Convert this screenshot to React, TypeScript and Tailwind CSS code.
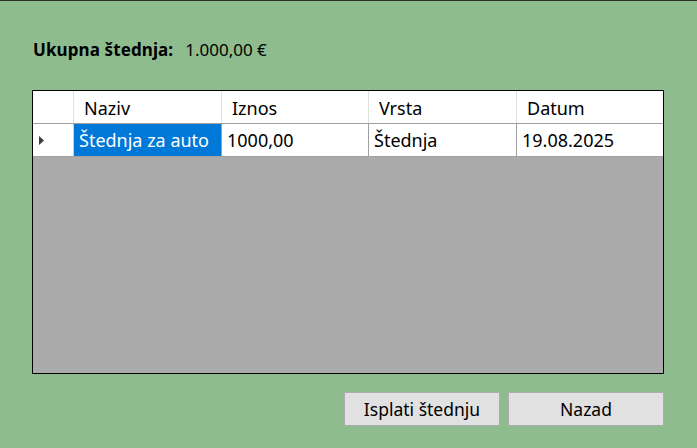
export default function App() {
  const font = { fontFamily: '"Noto Sans", "Open Sans", sans-serif' };
  return (
    <div
      className="w-[697px] h-[448px] bg-[#8fbc8f] border-t border-[#2b2b2b] text-black overflow-hidden"
      style={font}
    >
      {/* Summary */}
      <div className="flex items-center h-[22px] mt-[37px] ml-[33px] gap-[12px]">
        <span className="text-[17px] font-bold leading-none tracking-[0.1px]">Ukupna štednja:</span>
        <span className="text-[17px] leading-none">1.000,00 €</span>
      </div>

      {/* Grid */}
      <div className="ml-[32px] mt-[30px] w-[632px] h-[284px] border border-black bg-[#ababab] flex flex-col">
        <div className="flex h-[33px] bg-white border-b border-[#a0a0a0] text-[18px]">
          <div className="w-[41px] border-r border-[#e0e0e0]" />
          <div className="w-[148px] border-r border-[#e0e0e0] pl-[10px] pt-[3px] flex items-center">Naziv</div>
          <div className="w-[147px] border-r border-[#e0e0e0] pl-[10px] pt-[3px] flex items-center">Iznos</div>
          <div className="w-[148px] border-r border-[#e0e0e0] pl-[10px] pt-[3px] flex items-center">Vrsta</div>
          <div className="flex-1 pl-[10px] pt-[3px] flex items-center">Datum</div>
        </div>
        <div className="flex h-[33px] bg-white border-b border-[#a0a0a0] text-[18px]">
          <div className="w-[41px] border-r border-[#d0d0d0] flex items-center pl-[6px]">
            <svg width="6" height="9" viewBox="0 0 6 9">
              <path d="M0 0 L5 4.5 L0 9 Z" fill="#3c3c3c" />
            </svg>
          </div>
          <div className="w-[148px] border-r border-[#a0a0a0] bg-[#0078d7] text-white pl-[5px] pt-[1px] flex items-center">
            Štednja za auto
          </div>
          <div className="w-[147px] border-r border-[#a0a0a0] pl-[5px] pt-[1px] flex items-center">1000,00</div>
          <div className="w-[148px] border-r border-[#a0a0a0] pl-[5px] pt-[1px] flex items-center">Štednja</div>
          <div className="flex-1 pl-[5px] pt-[1px] flex items-center">19.08.2025</div>
        </div>
      </div>

      {/* Buttons */}
      <div className="flex justify-end gap-[8px] w-[664px] mt-[18px]">
        <button className="w-[156px] h-[34px] bg-[#e1e1e1] border border-[#adadad] text-[17.5px]">
          Isplati štednju
        </button>
        <button className="w-[156px] h-[34px] bg-[#e1e1e1] border border-[#adadad] text-[17.5px]">
          Nazad
        </button>
      </div>
    </div>
  );
}
